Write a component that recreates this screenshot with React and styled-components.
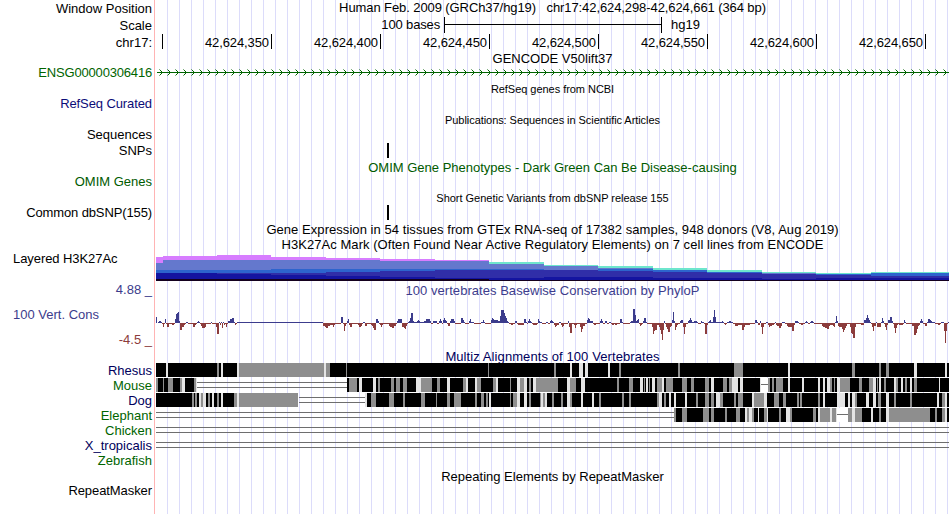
import React from 'react';
import styled, { createGlobalStyle } from 'styled-components';

const GlobalStyle = createGlobalStyle`
  body {
    margin: 0;
    background: #fff;
  }
`;

const INK = '#000';
const GREEN = '#006400';
const OMIM_GREEN = '#005a00';
const NAVY = '#0c0c78';
const DEEP_NAVY = '#00005c';
const SIGNAL_BLUE = '#3c3c8c';
const SIGNAL_RED = '#8c3c3c';

const Browser = styled.div`
  display: flex;
  flex-direction: column;
  width: 949px;
  height: 514px;
  overflow: hidden;
  font-family: 'Liberation Sans', Arial, sans-serif;
  font-size: 13px;
  line-height: 17px;
  white-space: pre;
  background:
    linear-gradient(#ffb4b4, #ffb4b4) 154px 0 / 1px 100% no-repeat,
    repeating-linear-gradient(to right, #dcdcfa 0 1px, transparent 1px 12px) 167px 0 / 782px 100% no-repeat,
    #fff;
`;

const Row = styled.div`
  display: flex;
  flex: none;
  height: ${(p) => p.$height}px;
`;

const LabelColumn = styled.div`
  flex: none;
  width: 156px;
  box-sizing: border-box;
  padding-right: 4px;
`;

const Label = styled.div`
  text-align: ${(p) => (p.$left ? 'left' : 'right')};
  padding-left: ${(p) => (p.$left ? 13 : 0)}px;
  margin-top: ${(p) => p.$top || 0}px;
  color: ${(p) => p.$color || INK};
  letter-spacing: ${(p) => p.$track || 0}px;
`;

const Title = styled.div`
  flex: 1;
  text-align: center;
  margin-top: ${(p) => p.$top || 0}px;
  font-size: ${(p) => (p.$small ? 11 : 13)}px;
  color: ${(p) => p.$color || INK};
  letter-spacing: ${(p) => p.$track || 0}px;
`;

const Plot = styled.svg`
  display: block;
  flex: none;
  width: 793px;
  height: ${(p) => p.$height}px;
  shape-rendering: ${(p) => (p.$smooth ? 'auto' : 'crispEdges')};
`;

const ScaleBar = styled.div`
  display: flex;
  width: 793px;
  height: 16px;
  line-height: 15px;
`;

const ScaleText = styled.span`
  width: 284px;
  text-align: right;
  letter-spacing: -0.15px;
`;

const ScaleLine = styled.div`
  width: 216px;
  margin: 0 9px 0 4px;
  border: solid #000;
  border-width: 0 1px;

  &::after {
    content: '';
    display: block;
    height: 1px;
    margin-top: 7px;
    background: #000;
  }
`;

const Ruler = styled.div`
  display: flex;
  height: 15px;
`;

const RulerCell = styled.div`
  box-sizing: border-box;
  width: ${(p) => p.$width}px;
  height: 15px;
  padding-right: 2px;
  border-right: 1px solid #000;
  text-align: right;
  letter-spacing: -0.1px;
`;

const Variant = styled.div`
  width: 2px;
  height: 15px;
  margin: 1px 0 0 231px;
  background: #000;
`;

const positions = ['42,624,350', '42,624,400', '42,624,450', '42,624,500', '42,624,550', '42,624,600', '42,624,650'];

// Each entry is [x, outer colour, top of each layer from the outermost down]
const PINK = '#d77dff';
const TEAL = '#6ee6cd';
const layerColors = ['#6478cd', '#2d64cd', '#302ea8', '#1414a0', '#14001e'];
const histone = [
  [156, PINK, 257, 263, 270, 273, 273, 279],
  [163, PINK, 256, 260, 270, 273, 273, 279],
  [217, PINK, 255, 260, 270, 273, 274, 279],
  [271, PINK, 257, 260, 269, 273, 275, 279],
  [326, PINK, 258, 260, 269, 272, 276, 279],
  [380, PINK, 259, 261, 269, 271, 277, 279],
  [435, PINK, 260, 261, 269, 270, 278, 279],
  [489, TEAL, 262, 264, 269, 270, 278, 280],
  [544, TEAL, 265, 266, 270, 270, 277, 280],
  [598, TEAL, 266, 268, 269, 271, 277, 280],
  [653, TEAL, 268, 270, 270, 272, 278, 280],
  [707, TEAL, 270, 272, 272, 273, 278, 280],
  [762, TEAL, 272, 273, 274, 274, 279, 280],
  [816, TEAL, 273, 274, 274, 275, 278, 280],
  [871, TEAL, 272, 273, 273, 276, 278, 280],
];

// [x, score]: every score holds until the next x
const phyloP = [
  [156, 6], [157, 0], [158, 1], [159, 2], [161, 1], [162, -1], [163, -4], [164, -1], [165, 4], [166, -1],
  [167, -4], [169, -1], [172, -2], [174, -1], [175, 4], [176, 9], [177, 10], [178, 11], [179, 2], [180, -7],
  [182, -4], [184, -2], [185, -1], [186, 1], [188, -1], [193, -4], [195, -2], [196, -1], [197, 1], [198, 2],
  [199, 1], [200, -1], [201, -3], [202, -5], [205, -4], [206, -1], [211, 1], [212, -1], [216, -4], [217, -11],
  [219, 1], [220, -2], [221, 1], [222, -5], [223, 1], [224, -2], [225, -1], [226, -4], [227, -1], [228, 2],
  [230, 4], [232, 5], [234, 1], [235, -2], [236, -1], [237, 1], [323, -3], [325, -4], [326, -5], [328, -3],
  [330, -2], [333, -4], [334, -2], [335, -1], [341, 6], [343, -1], [344, -8], [345, -3], [346, -1], [347, 2],
  [348, 4], [349, -2], [350, -4], [352, -1], [358, -2], [359, -4], [361, -3], [362, -1], [363, 1], [365, -3],
  [367, -1], [371, -2], [372, -3], [373, -5], [374, -7], [376, 4], [378, 2], [379, -1], [380, -2], [381, -4],
  [382, -2], [383, -1], [389, -3], [390, -4], [392, -5], [394, -3], [396, -1], [397, 2], [398, 4], [402, -4],
  [404, -5], [405, -6], [406, -3], [407, -1], [408, 1], [409, 2], [410, 5], [411, 10], [413, 2], [414, 1],
  [417, 2], [418, 3], [419, 2], [420, 1], [424, 2], [426, 4], [430, 2], [431, -1], [433, 2], [437, -1],
  [439, 2], [440, 4], [441, 2], [442, -1], [443, 3], [444, 5], [445, 3], [446, 2], [447, -1], [448, -3],
  [450, 2], [451, 4], [454, 2], [455, -1], [461, 5], [463, 3], [464, 1], [465, -1], [469, 2], [470, 4],
  [471, 1], [474, -1], [481, 1], [483, 3], [484, 1], [485, -1], [491, 3], [492, 5], [493, 4], [494, 3],
  [498, 2], [500, 7], [501, 13], [504, 10], [505, 7], [506, 5], [507, 2], [508, 1], [509, -1], [511, -2],
  [513, -1], [515, 2], [517, -1], [518, -2], [524, 4], [526, 1], [527, -1], [528, 2], [529, 4], [530, 2],
  [531, 1], [532, -1], [533, -2], [537, -1], [538, 4], [539, 2], [540, 1], [542, -1], [546, 1], [548, -1],
  [550, 2], [551, 3], [552, 2], [553, 1], [554, -2], [555, -4], [556, -3], [557, -2], [559, 1], [561, -2],
  [562, -4], [563, -3], [564, -1], [568, 2], [569, -4], [570, -10], [572, -1], [574, -2], [575, -5], [576, -2],
  [577, -1], [580, -4], [581, -9], [582, -6], [583, -3], [585, -1], [587, 3], [588, 5], [589, 4], [590, 2],
  [593, -1], [594, -2], [596, -1], [600, 2], [601, 4], [602, 2], [603, -1], [605, 2], [607, -1], [609, 1],
  [611, -1], [612, -2], [614, -1], [615, -2], [617, -1], [620, 4], [622, 1], [623, -1], [630, 1], [631, 2],
  [633, 14], [635, 8], [636, 2], [637, 3], [638, 4], [639, -1], [640, -3], [641, -2], [642, -1], [643, 2],
  [644, 5], [646, 1], [647, -1], [652, -4], [653, -11], [654, -8], [655, -7], [657, -2], [659, -4], [660, -7],
  [661, -11], [662, -17], [663, -7], [664, 2], [665, -1], [666, -4], [667, -6], [668, -9], [670, -4], [671, -3],
  [672, 3], [673, 11], [674, 2], [675, -7], [676, -4], [677, -2], [678, -1], [680, 2], [681, 3], [683, -4],
  [684, -11], [685, -4], [686, -1], [688, 2], [689, 3], [690, 5], [691, 3], [692, 1], [694, 2], [697, 1],
  [698, -1], [701, 2], [702, 1], [704, -1], [705, -11], [707, -2], [708, 1], [709, 2], [710, 3], [711, 1],
  [713, 6], [714, 13], [715, 6], [716, 1], [722, 2], [723, 1], [724, -1], [725, -2], [726, -1], [727, 1],
  [729, 2], [731, 1], [733, -1], [735, -3], [738, -2], [742, -7], [744, -4], [745, -2], [750, -1], [755, 3],
  [757, 1], [758, -2], [760, 2], [761, -4], [762, -11], [763, -4], [764, -1], [766, 1], [768, -2], [769, -4],
  [770, -3], [772, -2], [774, -1], [775, 1], [776, -2], [777, -3], [779, -5], [781, -3], [782, 1], [785, -1],
  [787, -3], [788, -4], [792, -8], [794, -2], [795, 2], [798, 1], [799, -1], [801, -2], [803, -1], [805, 1],
  [806, 2], [807, 1], [808, -1], [810, 1], [811, 2], [813, 1], [814, -1], [822, -3], [823, -4], [825, -5],
  [827, -6], [829, -3], [830, -2], [833, -3], [834, -4], [835, 1], [836, 7], [837, 2], [838, -3], [839, -4],
  [842, -6], [843, -9], [844, -7], [845, -5], [846, -3], [847, -1], [850, -4], [851, -10], [852, -11], [853, -15],
  [855, -4], [856, -1], [861, -2], [864, 3], [866, 5], [867, 8], [868, 5], [869, 3], [870, 1], [871, -1],
  [872, -4], [873, -8], [874, -3], [876, 1], [877, -4], [881, 1], [882, 5], [883, 2], [884, -1], [885, -4],
  [886, -7], [887, -2], [888, 3], [890, 6], [892, 2], [893, -1], [894, -5], [895, -10], [896, -5], [897, -2],
  [898, -1], [899, -2], [903, -1], [904, 3], [905, 1], [906, -1], [912, -3], [914, -12], [916, -10], [917, -6],
  [918, -3], [919, -2], [920, 2], [921, 4], [922, 2], [923, -1], [925, -3], [927, 1], [928, 4], [930, 3],
  [931, 2], [932, 1], [935, -1], [938, -2], [940, -1], [941, 1], [944, -8], [945, -20], [946, -8], [947, -1],
  [948, 1], [949, 0],
];

// Bars are black with grey and pale stretches given as [x, width]
const species = [
  {
    name: 'Rhesus',
    color: DEEP_NAVY,
    bars: [[156, 793]],
    grey: [[217, 2], [239, 85], [326, 4], [346, 1], [488, 1], [554, 2], [619, 2], [678, 2], [734, 9], [852, 3], [879, 2], [886, 3]],
    pale: [[166, 2], [221, 2], [237, 2], [324, 2], [570, 2], [579, 4], [585, 3], [608, 2], [788, 2], [914, 3], [945, 2]],
  },
  {
    name: 'Mouse',
    color: GREEN,
    bars: [[156, 41], [347, 414], [768, 181]],
    double: [[197, 150]],
    single: [[761, 7]],
    grey: [
      [156, 2], [163, 1], [168, 5], [180, 2], [194, 2], [349, 8], [378, 2], [391, 3], [396, 4], [403, 4],
      [421, 11], [437, 3], [463, 3], [477, 4], [493, 3], [510, 1], [520, 4], [529, 2], [536, 22], [570, 6],
      [617, 2], [629, 4], [644, 1], [649, 1], [657, 5], [666, 7], [682, 5], [691, 3], [705, 4], [723, 4],
      [729, 3], [768, 2], [772, 2], [776, 7], [830, 2], [834, 1], [840, 10], [859, 3], [869, 4], [877, 1],
      [884, 2], [896, 2], [905, 2], [914, 3],
    ],
    pale: [
      [182, 3], [196, 1], [359, 3], [373, 3], [416, 5], [447, 3], [466, 2], [475, 2], [496, 2], [517, 3],
      [524, 3], [533, 3], [567, 3], [581, 4], [640, 3], [646, 2], [652, 3], [662, 2], [711, 3], [732, 6],
      [740, 3], [760, 1], [788, 2], [802, 2], [818, 2], [823, 2], [827, 3], [837, 3], [873, 3], [879, 2],
      [894, 2], [901, 2], [910, 2], [939, 1],
    ],
  },
  {
    name: 'Dog',
    color: DEEP_NAVY,
    bars: [[156, 142], [365, 584]],
    double: [[299, 66]],
    grey: [
      [192, 2], [195, 2], [201, 2], [208, 2], [217, 2], [234, 3], [239, 59], [371, 5], [389, 5], [403, 2],
      [421, 4], [436, 1], [447, 3], [454, 7], [475, 2], [481, 3], [486, 2], [510, 1], [513, 4], [529, 2],
      [540, 1], [543, 2], [552, 2], [561, 2], [570, 2], [599, 2], [622, 2], [629, 2], [657, 2], [664, 2],
      [696, 2], [705, 4], [711, 3], [720, 3], [734, 2], [738, 5], [754, 10], [774, 5], [783, 3], [797, 2],
      [800, 2], [818, 2], [855, 2], [878, 3], [894, 2], [910, 2], [942, 3],
    ],
    pale: [
      [199, 2], [203, 3], [212, 2], [221, 2], [237, 2], [365, 2], [489, 2], [517, 3], [524, 3], [541, 2],
      [545, 2], [567, 3], [581, 2], [592, 2], [659, 3], [669, 2], [674, 2], [685, 2], [716, 4], [752, 2],
      [764, 3], [823, 2], [837, 8], [848, 2], [852, 3], [866, 3], [873, 3], [886, 3], [937, 2], [945, 2],
    ],
  },
  {
    name: 'Elephant',
    color: GREEN,
    bars: [[674, 163], [848, 101]],
    double: [[156, 518]],
    single: [[837, 11]],
    grey: [
      [674, 2], [682, 5], [703, 6], [711, 3], [725, 2], [736, 4], [747, 2], [752, 2], [764, 3], [779, 2],
      [790, 2], [813, 3], [820, 10], [832, 4], [848, 4], [855, 7], [879, 2], [889, 41], [935, 2], [942, 3],
    ],
    pale: [[745, 2], [749, 3], [758, 1], [767, 1], [786, 4], [818, 2], [830, 2], [836, 1], [852, 3], [871, 2], [886, 3], [945, 2]],
  },
  { name: 'Chicken', color: GREEN, double: [[156, 793]] },
  { name: 'X_tropicalis', color: DEEP_NAVY, double: [[156, 793]] },
  { name: 'Zebrafish', color: GREEN },
];

const TitleRow = ({ height, children, ...rest }) => (
  <Row $height={height}>
    <LabelColumn />
    <Title {...rest}>{children}</Title>
  </Row>
);

const LabelRow = ({ height, label, children, ...rest }) => (
  <Row $height={height}>
    <LabelColumn>
      <Label {...rest}>{label}</Label>
    </LabelColumn>
    {children}
  </Row>
);

const GeneArrows = () => (
  <Plot viewBox="156 64 793 16" $height={16} $smooth>
    <rect x="157" y="72" width="792" height="1" fill={GREEN} />
    {Array.from({ length: 99 }, (_, i) => (
      <path key={i} d={`M${159.5 + i * 8} 69.5l3 3l-3 3`} fill="none" stroke={GREEN} strokeWidth="1" />
    ))}
  </Plot>
);

const HistonePlot = () => (
  <Plot viewBox="156 250 793 32" $height={32}>
    {histone.map(([x, outer, ...tops], i) => {
      const end = i + 1 < histone.length ? histone[i + 1][0] : 949;
      return [outer, ...layerColors].map((fill, layer) => (
        <rect key={`${x}-${layer}`} x={x} y={tops[layer]} width={end - x} height={281 - tops[layer]} fill={fill} />
      ));
    })}
  </Plot>
);

const ConservationPlot = () => (
  <Plot viewBox="156 299 793 49" $height={49}>
    {phyloP.slice(0, -1).map(([x, score], i) => (
      <rect
        key={x}
        x={x}
        y={score > 0 ? 323 - score : 323}
        width={phyloP[i + 1][0] - x}
        height={Math.abs(score)}
        fill={score > 0 ? SIGNAL_BLUE : SIGNAL_RED}
      />
    ))}
  </Plot>
);

const Blocks = ({ items = [], y = 0, height = 14, fill }) =>
  items.map(([x, width]) => <rect key={x} x={x} y={y} width={width} height={height} fill={fill} />);

const AlignmentPlot = ({ bars, grey, pale, double, single }) => (
  <Plot viewBox="156 0 793 15" $height={15}>
    <Blocks items={single} height={14} fill="#fff" />
    <Blocks items={double} y={4} height={1} fill="#6e6e6e" />
    <Blocks items={double} y={9} height={1} fill="#6e6e6e" />
    <Blocks items={single} y={6} height={1} fill="#6e6e6e" />
    <Blocks items={bars} fill="#000" />
    <Blocks items={grey} fill="#8e8e8e" />
    <Blocks items={pale} fill="#e4e4e4" />
  </Plot>
);

const App = () => (
  <>
    <GlobalStyle />
    <Browser>
      <LabelRow height={17} label="Window Position">
        <Title $top={-1} $track={-0.09}>
          {'Human Feb. 2009 (GRCh37/hg19)   chr17:42,624,298-42,624,661 (364 bp)'}
        </Title>
      </LabelRow>
      <LabelRow height={17} label="Scale">
        <ScaleBar>
          <ScaleText>100 bases</ScaleText>
          <ScaleLine />
          <span>hg19</span>
        </ScaleBar>
      </LabelRow>
      <LabelRow height={16} label="chr17:">
        <Ruler>
          <RulerCell $width={7} />
          {positions.map((position) => (
            <RulerCell key={position} $width={109}>
              {position}
            </RulerCell>
          ))}
        </Ruler>
      </LabelRow>
      <TitleRow height={14}>GENCODE V50lift37</TitleRow>
      <LabelRow height={16} label="ENSG00000306416" $color={GREEN} $track={-0.18}>
        <GeneArrows />
      </LabelRow>
      <TitleRow height={15} $small $top={1} $track={-0.04}>RefSeq genes from NCBI</TitleRow>
      <LabelRow height={16} label="RefSeq Curated" $color={NAVY} $track={-0.1} />
      <TitleRow height={15} $small $top={1} $track={-0.06}>Publications: Sequences in Scientific Articles</TitleRow>
      <LabelRow height={16} label="Sequences" />
      <LabelRow height={17} label="SNPs">
        <Variant />
      </LabelRow>
      <TitleRow height={14} $color={OMIM_GREEN}>OMIM Gene Phenotypes - Dark Green Can Be Disease-causing</TitleRow>
      <LabelRow height={16} label="OMIM Genes" $color={OMIM_GREEN} />
      <TitleRow height={15} $small $top={1} $track={-0.02}>Short Genetic Variants from dbSNP release 155</TitleRow>
      <LabelRow height={17} label="Common dbSNP(155)" $track={-0.12}>
        <Variant />
      </LabelRow>
      <TitleRow height={15} $track={0.055}>Gene Expression in 54 tissues from GTEx RNA-seq of 17382 samples, 948 donors (V8, Aug 2019)</TitleRow>
      <TitleRow height={14} $track={0.05}>H3K27Ac Mark (Often Found Near Active Regulatory Elements) on 7 cell lines from ENCODE</TitleRow>
      <LabelRow height={32} label="Layered H3K27Ac" $left $track={-0.07}>
        <HistonePlot />
      </LabelRow>
      <LabelRow height={17} label="4.88 _" $color={SIGNAL_BLUE} $top={-1}>
        <Title $color={SIGNAL_BLUE} $track={0.04}>100 vertebrates Basewise Conservation by PhyloP</Title>
      </LabelRow>
      <Row $height={49}>
        <LabelColumn>
          <Label $left $top={7} $color={SIGNAL_BLUE}>100 Vert. Cons</Label>
          <Label $top={8} $color={SIGNAL_RED}>-4.5 _</Label>
        </LabelColumn>
        <ConservationPlot />
      </Row>
      <TitleRow height={15} $color={DEEP_NAVY} $track={0.09}>Multiz Alignments of 100 Vertebrates</TitleRow>
      {species.map(({ name, color, ...alignment }) => (
        <LabelRow key={name} height={15} label={name} $color={color} $top={-1}>
          <AlignmentPlot {...alignment} />
        </LabelRow>
      ))}
      <TitleRow height={14}>Repeating Elements by RepeatMasker</TitleRow>
      <LabelRow height={32} label="RepeatMasker" $track={-0.08} />
    </Browser>
  </>
);

export default App;
